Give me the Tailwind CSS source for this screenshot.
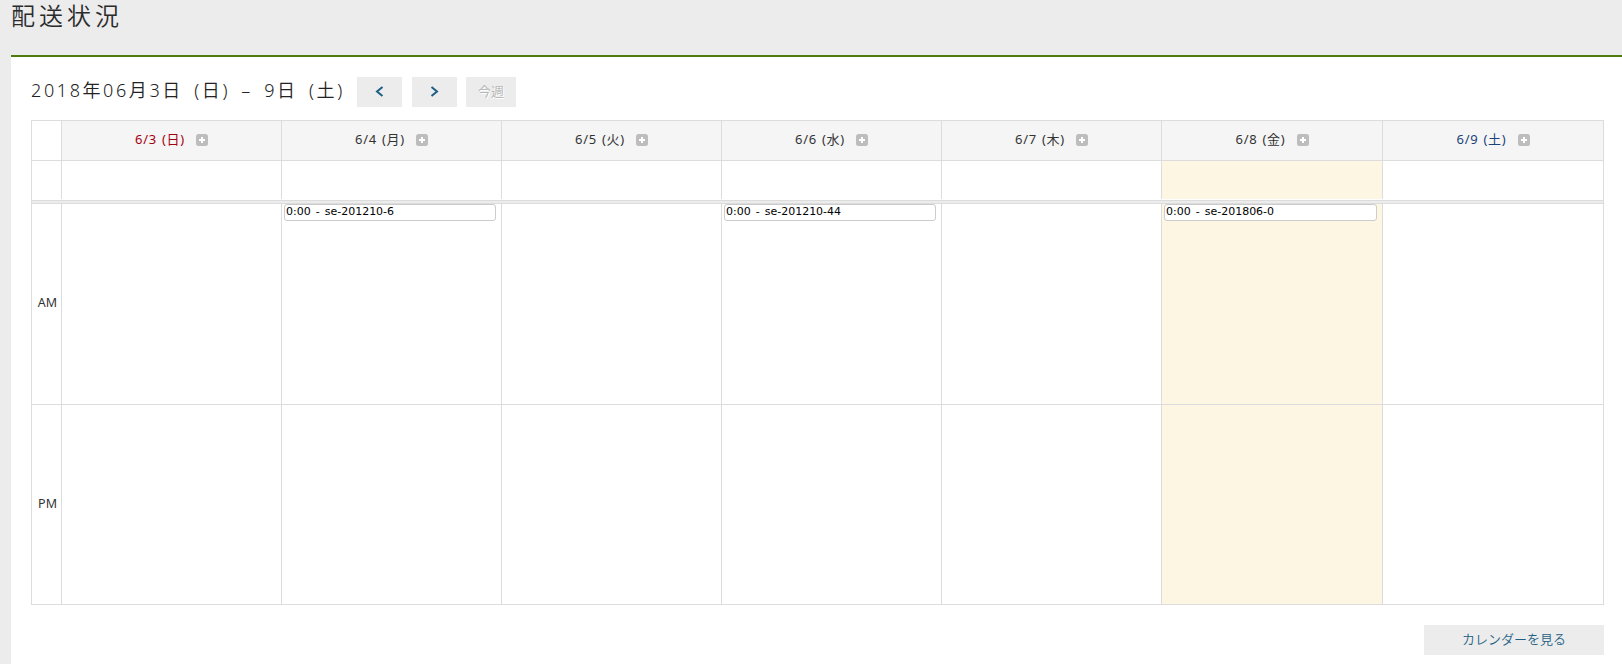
<!DOCTYPE html>
<html lang="ja">
<head>
<meta charset="utf-8">
<title>配送状況</title>
<script src="https://cdn.jsdelivr.net/npm/@tailwindcss/browser@4"></script>
</head>
<body class="h-[664px] overflow-hidden bg-[#ececec] pl-[11px] font-['Noto_Sans','Noto_Sans_CJK_JP',sans-serif] text-[#333]">
<h1 class="h-[55px] text-[24px] leading-[30px] font-[350] tracking-[4px] text-[#2b2b2b] font-['Noto_Sans_CJK_JP',sans-serif]">配送状況</h1>
<main class="h-[609px] border-t-2 border-[#4e7a0e] bg-white pt-5 pl-5 pr-[18px]">
  <div class="flex h-[30px] items-center">
    <h2 class="w-[326px] whitespace-pre text-[18px] leading-[30px] font-[350] tracking-[2.6px] pb-1 text-[#222] [word-spacing:4px]">2018年06月3日 (日) – 9日 (土)</h2>
    <button class="flex h-[30px] w-[45px] items-center justify-center bg-[#ececec] pb-0.5"><svg width="9" height="11" viewBox="0 0 9 11" fill="none" stroke="#1d5f85" stroke-width="2"><path d="M7.5 1 2 5.5 7.5 10"/></svg></button>
    <button class="ml-[10px] flex h-[30px] w-[45px] items-center justify-center bg-[#ececec] pb-0.5"><svg width="9" height="11" viewBox="0 0 9 11" fill="none" stroke="#1d5f85" stroke-width="2"><path d="M1.5 1 7 5.5 1.5 10"/></svg></button>
    <button class="ml-[9px] h-[30px] w-[50px] bg-[#ececec] pb-px text-[13px] text-[#b8b8b8] [text-shadow:1px_1px_0_#fff]">今週</button>
  </div>
  <section class="mt-[13px] w-[1573px] border border-[#dcdcdc] text-[13px]">
    <div id="head" class="grid h-10 grid-cols-[29px_220px_220px_220px_220px_220px_221px_221px] border-b border-[#dcdcdc]"><div></div></div>
    <div id="allday" class="grid h-[38px] grid-cols-[29px_220px_220px_220px_220px_220px_221px_221px]"><div></div></div>
    <div class="mt-px h-1 border-y border-[#dcdcdc] bg-[#ececec]"></div>
    <div id="am" class="grid h-[201px] grid-cols-[29px_220px_220px_220px_220px_220px_221px_221px] border-b border-[#dcdcdc]"><div class="pr-1 text-right text-[12.5px] leading-[197px]">AM</div></div>
    <div id="pm" class="grid h-[199px] grid-cols-[29px_220px_220px_220px_220px_220px_221px_221px]"><div class="pr-1 text-right text-[12.5px] leading-[197px]">PM</div></div>
  </section>
  <div class="mt-5 flex justify-end pr-0"><button class="h-[30px] w-[180px] bg-[#ececec] pb-px text-[13px] font-[350] text-[#1d5f85]">カレンダーを見る</button></div>
</main>
<script>
const days = ['日','月','火','水','木','金','土'];
const events = {1:'0:00 - se-201210-6', 3:'0:00 - se-201210-44', 5:'0:00 - se-201806-0'};
days.forEach((d, i) => {
  const color = i === 0 ? 'text-[#a5000f]' : i === 6 ? 'text-[#1b4379]' : 'text-[#333]';
  const today = i === 5 ? 'bg-[#fdf6e3]' : '';
  document.getElementById('head').insertAdjacentHTML('beforeend',
    `<div class="flex items-center justify-center border-l border-[#dcdcdc] bg-[#f5f5f5] pb-px ${color}"><span class="w-[61px] whitespace-nowrap pb-px text-[13px] tracking-[0.7px] [word-spacing:1px]">6/${i + 3} (${d})</span><svg width="12" height="12" viewBox="0 0 12 12"><rect width="12" height="12" rx="2.5" fill="#bdbdbd"/><path d="M6 3v6M3 6h6" stroke="#fff" stroke-width="2"/></svg></div>`);
  const event = events[i] ? `<div class="mx-0.5 mr-[5px] h-[17px] rounded-[3px] border border-[#ccc] bg-white pl-px font-['DejaVu_Sans'] text-[11px] leading-[13px] text-black whitespace-nowrap [word-spacing:1.5px]">${events[i]}</div>` : '';
  for (const id of ['allday', 'am', 'pm'])
    document.getElementById(id).insertAdjacentHTML('beforeend', `<div class="border-l border-[#dcdcdc] ${today}">${id === 'am' ? event : ''}</div>`);
});
</script>
</body>
</html>
